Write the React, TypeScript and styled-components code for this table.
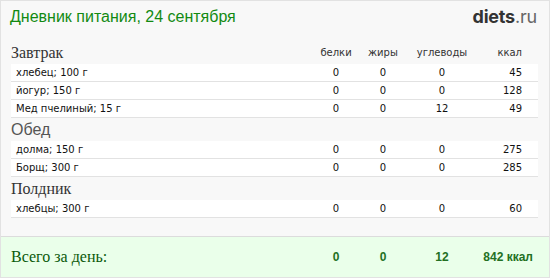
import React from "react";
import styled, { createGlobalStyle } from "styled-components";

const GlobalStyle = createGlobalStyle`
  html, body {
    margin: 0;
    padding: 0;
    background: #fff;
  }
`;

const cols = "1fr 46px 48px 70px 61px";

const Box = styled.div`
  width: 550px;
  height: 278px;
  box-sizing: border-box;
  border: 1px solid #e2e2e2;
  background: #f8f8f8;
  display: flex;
  flex-direction: column;
  font-family: "DejaVu Sans", Verdana, sans-serif;
`;

const TopBar = styled.div`
  height: 40px;
  display: flex;
  align-items: flex-start;
  justify-content: space-between;
  padding: 6px 12px 0 9px;
  box-sizing: border-box;
`;

const Title = styled.h1`
  margin: 0;
  font-family: "Liberation Sans", Arial, sans-serif;
  font-weight: normal;
  font-size: 16px;
  line-height: 20px;
  color: #128a12;
`;

const Logo = styled.div`
  font-family: Inter, "Open Sans", sans-serif;
  font-size: 18px;
  line-height: 20px;
  letter-spacing: -0.2px;
  color: #333;
  b {
    font-weight: 700;
  }
  span {
    color: #666;
    font-weight: 400;
  }
`;

const SectionHead = styled.div`
  height: 23px;
  margin: 0 11px 0 9px;
  display: grid;
  grid-template-columns: ${cols};
  align-items: center;
`;

const SectionName = styled.div<{ $serif?: boolean }>`
  font-family: ${(p) =>
    p.$serif ? '"Liberation Serif", "Times New Roman", serif' : '"Liberation Sans", Arial, sans-serif'};
  font-size: 16px;
  color: ${(p) => (p.$serif ? "#333" : "#555")};
  padding-left: 1px;
`;

const ColLabel = styled.div<{ $right?: boolean }>`
  font-size: 10px;
  color: #333;
  text-align: ${(p) => (p.$right ? "right" : "center")};
  padding-right: ${(p) => (p.$right ? "16px" : "0")};
`;

const Row = styled.div`
  height: 17px;
  margin: 0 11px 0 10px;
  background: #fff;
  border-bottom: 1px solid #e2e2e2;
  display: grid;
  grid-template-columns: ${cols};
  align-items: center;
  font-size: 10px;
  color: #111;
`;

const Name = styled.div`
  padding-left: 5px;
  white-space: nowrap;
`;

const Num = styled.div<{ $right?: boolean }>`
  text-align: ${(p) => (p.$right ? "right" : "center")};
  padding-right: ${(p) => (p.$right ? "16px" : "0")};
`;

const Footer = styled.div`
  margin-top: auto;
  height: 40px;
  border-top: 1px solid #dcdcdc;
  background: #eaffea;
  padding: 0 11px 0 9px;
  display: grid;
  grid-template-columns: ${cols};
  align-items: center;
`;

const TotalLabel = styled.div`
  font-family: "Liberation Serif", "Times New Roman", serif;
  font-size: 16px;
  color: #0a5a0a;
  padding-left: 1px;
`;

const TotalNum = styled.div<{ $right?: boolean }>`
  font-family: "Liberation Sans", Arial, sans-serif;
  font-weight: bold;
  font-size: 12px;
  color: #237023;
  text-align: ${(p) => (p.$right ? "right" : "center")};
  padding-right: ${(p) => (p.$right ? "5px" : "0")};
`;

type Item = { name: string; p: number; f: number; c: number; kcal: number };
type Meal = { title: string; serif: boolean; items: Item[] };

const meals: Meal[] = [
  {
    title: "Завтрак",
    serif: true,
    items: [
      { name: "хлебец; 100 г", p: 0, f: 0, c: 0, kcal: 45 },
      { name: "йогур; 150 г", p: 0, f: 0, c: 0, kcal: 128 },
      { name: "Мед пчелиный; 15 г", p: 0, f: 0, c: 12, kcal: 49 },
    ],
  },
  {
    title: "Обед",
    serif: false,
    items: [
      { name: "долма; 150 г", p: 0, f: 0, c: 0, kcal: 275 },
      { name: "Борщ; 300 г", p: 0, f: 0, c: 0, kcal: 285 },
    ],
  },
  {
    title: "Полдник",
    serif: true,
    items: [{ name: "хлебцы; 300 г", p: 0, f: 0, c: 0, kcal: 60 }],
  },
];

const App = () => {
  return (
    <>
      <GlobalStyle />
      <Box>
        <TopBar>
          <Title>Дневник питания, 24 сентября</Title>
          <Logo>
            <b>diets</b>
            <span>.ru</span>
          </Logo>
        </TopBar>
        {meals.map((meal, i) => (
          <React.Fragment key={meal.title}>
            <SectionHead>
              <SectionName $serif={meal.serif}>{meal.title}</SectionName>
              {i === 0 && (
                <>
                  <ColLabel>белки</ColLabel>
                  <ColLabel>жиры</ColLabel>
                  <ColLabel>углеводы</ColLabel>
                  <ColLabel $right>ккал</ColLabel>
                </>
              )}
            </SectionHead>
            {meal.items.map((it) => (
              <Row key={it.name}>
                <Name>{it.name}</Name>
                <Num>{it.p}</Num>
                <Num>{it.f}</Num>
                <Num>{it.c}</Num>
                <Num $right>{it.kcal}</Num>
              </Row>
            ))}
          </React.Fragment>
        ))}
        <Footer>
          <TotalLabel>Всего за день:</TotalLabel>
          <TotalNum>0</TotalNum>
          <TotalNum>0</TotalNum>
          <TotalNum>12</TotalNum>
          <TotalNum $right>842 ккал</TotalNum>
        </Footer>
      </Box>
    </>
  );
};

export default App;
